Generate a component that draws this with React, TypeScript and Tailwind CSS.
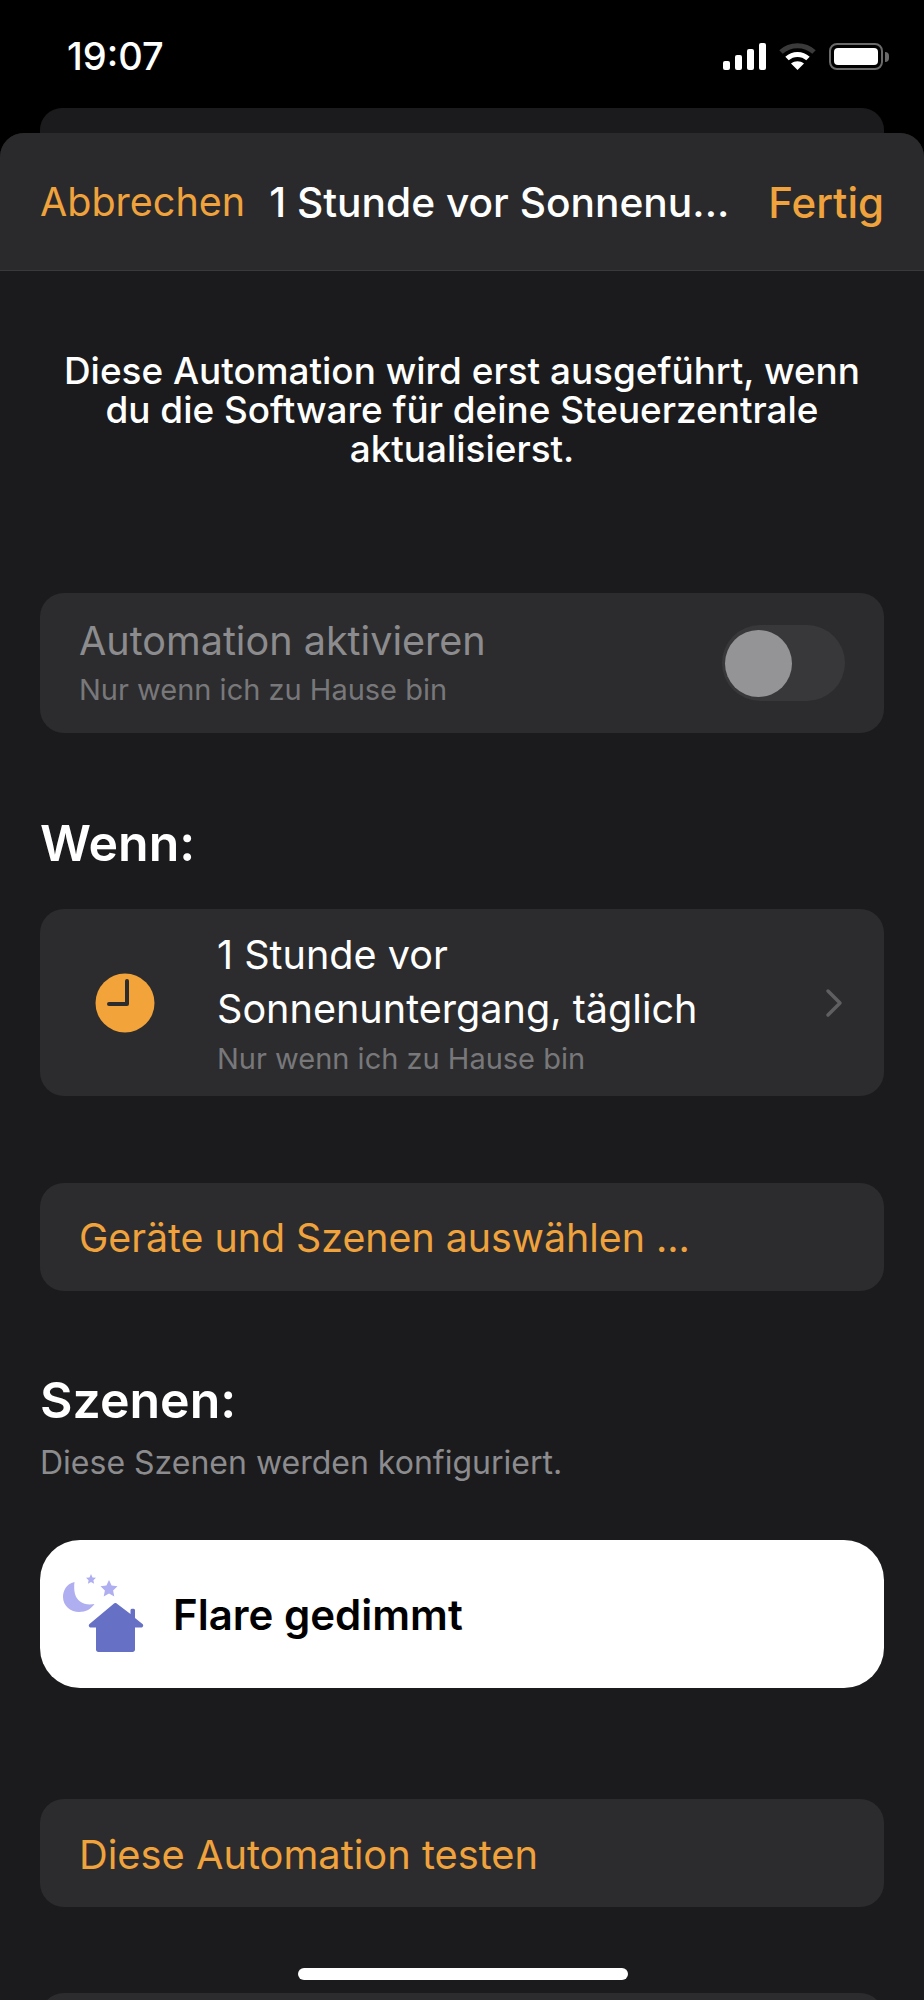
import React from "react"

const font = "font-['Inter','Liberation_Sans',sans-serif]"

function StatusIcons() {
    return (
        <div className="flex items-center gap-[13px]">
            {/* Signal */}
            <svg width="43" height="27" viewBox="0 0 43 27" fill="#fff">
                <rect x="0" y="18" width="7" height="9" rx="2" />
                <rect x="12" y="12" width="7" height="15" rx="2" />
                <rect x="24" y="6" width="7" height="21" rx="2" />
                <rect x="36" y="0" width="7" height="27" rx="2" />
            </svg>
            {/* Wifi */}
            <svg width="37" height="27" viewBox="0 0 37 27" fill="none">
                <path d="M2 9C11 0.5 26 0.5 35 9" stroke="#3a3a3a" strokeWidth="5" />
                <path d="M8 15.5C14 10 23 10 29 15.5" stroke="#fff" strokeWidth="5" />
                <path d="M18.5 27L12 20.5C16 17.5 21 17.5 25 20.5Z" fill="#fff" />
            </svg>
            {/* Battery */}
            <div className="flex items-center gap-[2px]">
                <div className="w-[54px] h-[27px] rounded-[8px] border-2 border-[#6a6a6a] p-[3px]">
                    <div className="w-full h-full rounded-[4px] bg-white" />
                </div>
                <div className="w-[4px] h-[10px] rounded-r-full bg-[#6a6a6a]" />
            </div>
        </div>
    )
}

function ClockIcon() {
    return (
        <svg width="60" height="60" viewBox="0 0 60 60">
            <circle cx="30" cy="30" r="29.5" fill="#f2a33a" />
            <path d="M32 8V31H14" fill="none" stroke="#2c2c2e" strokeWidth="4" strokeLinecap="round" strokeLinejoin="round" />
        </svg>
    )
}

function SceneIcon() {
    return (
        <svg width="86" height="81" viewBox="0 0 86 81">
            {/* Moon */}
            <path d="M14.5 8C6 10 3 17 3 23C3 32 11 38 19 38C26 38 31 35 34.5 30C24 32 17 27 15 20C14 16 14 12 14.5 8Z" fill="#aeaef0" />
            {/* Stars */}
            <path d="M31 0L32.5 3.4L36 3.8L33.4 6.2L34.1 9.8L31 8L27.9 9.8L28.6 6.2L26 3.8L29.5 3.4Z" fill="#aeaef0" />
            <path d="M49 6L51.6 11.6L57.5 12.3L53.1 16.4L54.3 22.5L49 19.4L43.7 22.5L44.9 16.4L40.5 12.3L46.4 11.6Z" fill="#aeaef0" />
            {/* House */}
            <path d="M56 29L70.5 40V36C70.5 34.4 75 34.4 75 36V44L82.5 50C84 51.4 83 53.5 81 53.5H75V75.5C75 77 74 78 72.5 78H38.5C37 78 36 77 36 75.5V53.5H31C29 53.5 28 51.4 29.5 50L54 29.5C54.6 29 55.4 29 56 29Z" fill="#6670c4" />
        </svg>
    )
}

export default function App() {
    return (
        <div className={`relative w-[924px] h-[2000px] overflow-hidden bg-black ${font}`}>
            {/* Status bar */}
            <div className="flex h-[108px] items-start justify-between pl-[67px] pr-[35px] pt-[36px]">
                <span className="text-[38px] leading-[40px] font-medium text-white">19:07</span>
                <div className="pt-[7px]">
                    <StatusIcons />
                </div>
            </div>

            {/* Sheet behind */}
            <div className="mx-[40px] h-[25px] rounded-t-[22px] bg-[#1b1b1d]" />

            {/* Sheet */}
            <div className="rounded-t-[24px] bg-[#1b1b1d] h-[1867px] overflow-hidden">
                <div className="flex h-[138px] items-center border-b border-[#3a3a3c] bg-[#2a2a2c] pl-[40px] pr-[40px] pt-[2px]">
                    <span className="text-[39.5px] text-[#f0a33c]">Abbrechen</span>
                    <span className="ml-[24px] text-[40.7px] font-medium text-white">1 Stunde vor Sonnenu...</span>
                    <span className="ml-auto text-[42px] font-medium text-[#f0a33c]">Fertig</span>
                </div>

                <p className="mt-[80px] text-center text-[36.9px] leading-[39px] font-medium text-white">
                    Diese Automation wird erst ausgeführt, wenn
                    <br />
                    du die Software für deine Steuerzentrale
                    <br />
                    aktualisierst.
                </p>

                <div className="px-[40px]">
                    {/* Aktivieren */}
                    <div className="mt-[125px] flex h-[140px] items-center justify-between rounded-[24px] bg-[#2c2c2e] pl-[39px] pr-[39px]">
                        <div>
                            <div className="text-[39.6px] leading-[54px] text-[#8c8c8f]">Automation aktivieren</div>
                            <div className="text-[29px] leading-[44px] text-[#78787b]">Nur wenn ich zu Hause bin</div>
                        </div>
                        <div className="flex h-[76px] w-[123px] items-center rounded-full bg-[#38383a] pl-[3px]">
                            <div className="h-[67px] w-[67px] rounded-full bg-[#949496]" />
                        </div>
                    </div>

                    <h2 className="mt-[81px] text-[50px] leading-[58px] font-semibold text-white">Wenn:</h2>

                    {/* Wenn */}
                    <div className="mt-[37px] flex h-[187px] items-center rounded-[24px] bg-[#2c2c2e] pl-[55px] pr-[41px]">
                        <ClockIcon />
                        <div className="ml-[62px] flex-1 pt-[4px]">
                            <div className="text-[39.6px] leading-[54px] text-white">
                                1 Stunde vor
                                <br />
                                Sonnenuntergang, täglich
                            </div>
                            <div className="text-[29px] leading-[46px] text-[#78787b]">Nur wenn ich zu Hause bin</div>
                        </div>
                        <svg width="18" height="30" viewBox="0 0 18 30" fill="none">
                            <path d="M3 3L15 15L3 27" stroke="#5f5f62" strokeWidth="3.5" strokeLinecap="round" strokeLinejoin="round" />
                        </svg>
                    </div>

                    <div className="mt-[87px] flex h-[108px] items-center rounded-[24px] bg-[#2c2c2e] pl-[39px] pt-[3px] text-[39.3px] text-[#f0a33c]">
                        Geräte und Szenen auswählen ...
                    </div>

                    <h2 className="mt-[80px] text-[50px] leading-[58px] font-semibold text-white">Szenen:</h2>
                    <p className="mt-[14px] text-[32px] leading-[40px] text-[#8c8c8f]">Diese Szenen werden konfiguriert.</p>

                    {/* Szene */}
                    <div className="mt-[57px] flex h-[148px] items-center rounded-[40px] bg-white pl-[20px]">
                        <SceneIcon />
                        <span className="ml-[27px] text-[42px] font-semibold text-black">Flare gedimmt</span>
                    </div>

                    <div className="mt-[111px] flex h-[108px] items-center rounded-[24px] bg-[#2c2c2e] pl-[39px] pt-[3px] text-[39.8px] text-[#f0a33c]">
                        Diese Automation testen
                    </div>

                    <div className="mt-[86px] h-[40px] rounded-t-[24px] bg-[#2c2c2e]" />
                </div>
            </div>

            {/* Home indicator */}
            <div className="absolute left-[298px] top-[1968px] h-[12px] w-[330px] rounded-full bg-white" />
        </div>
    )
}
